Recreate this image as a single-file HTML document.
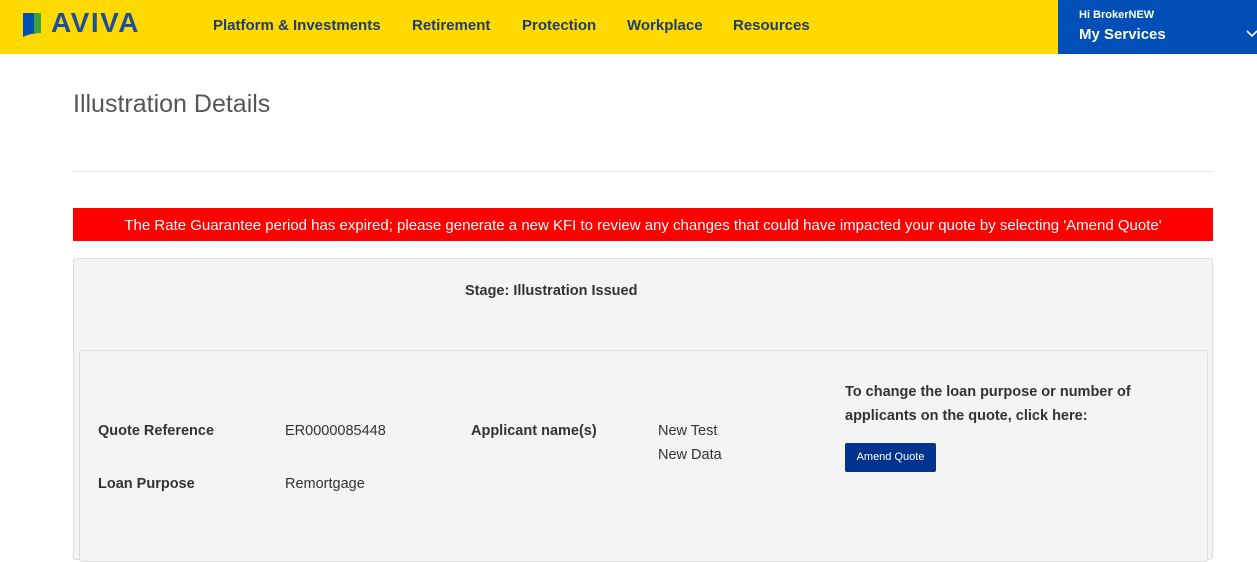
<!DOCTYPE html>
<html><head><meta charset="utf-8"><style>
body{margin:0;width:1257px;height:547px;overflow:hidden;background:#fff;font-family:"Liberation Sans",sans-serif;color:#333;position:relative}
.hdr{position:absolute;left:0;top:0;width:1257px;height:54px;background:#ffd900}
.nav{position:absolute;top:17px;font-size:15px;font-weight:bold;color:#1f3c74}
.svc{position:absolute;left:1058px;top:0;width:199px;height:54px;background:#004fb6;color:#fff}
.abs{position:absolute}
</style></head><body>
<div class="hdr">
 <svg class="abs" style="left:22px;top:12px" width="26" height="25"><path d="M1 1 L19 1 L19 21 Q9 21 1 25Z" fill="#004fb6"/><rect x="12" y="1" width="7" height="20" fill="#3ca33c"/></svg>
 <div class="abs" style="left:51px;top:7px;font-size:28px;font-weight:bold;color:#1d4f9e;letter-spacing:1.5px">AVIVA</div>
 <div class="nav" style="left:213px">Platform &amp; Investments</div>
 <div class="nav" style="left:412px">Retirement</div>
 <div class="nav" style="left:522px">Protection</div>
 <div class="nav" style="left:627px">Workplace</div>
 <div class="nav" style="left:733px">Resources</div>
 <div class="svc">
  <div class="abs" style="left:21px;top:9px;font-size:11px;font-weight:bold">Hi BrokerNEW</div>
  <div class="abs" style="left:21px;top:26px;font-size:15px;font-weight:bold">My Services</div>
  <svg class="abs" style="left:188px;top:30px" width="12" height="8"><path d="M1 1 L6 6 L11 1" stroke="#fff" stroke-width="1.6" fill="none"/></svg>
 </div>
</div>
<div class="abs" style="left:73px;top:90px;font-size:25px;color:#555">Illustration Details</div>
<div class="abs" style="left:73px;top:171px;width:1140px;height:1px;background:#e5e5e5"></div>
<div class="abs" style="left:73px;top:208px;width:1140px;height:33px;background:#ff0000;color:#fff;font-size:15px;text-align:center;line-height:35px">The Rate Guarantee period has expired; please generate a new KFI to review any changes that could have impacted your quote by selecting 'Amend Quote'</div>
<div class="abs" style="left:73px;top:258px;width:1138px;height:300px;background:#f4f4f4;border:1px solid #ddd;border-radius:3px"></div>
<div class="abs" style="left:465px;top:283px;font-size:14.5px;font-weight:bold">Stage: Illustration Issued</div>
<div class="abs" style="left:79px;top:350px;width:1127px;height:210px;background:#f4f4f4;border:1px solid #ddd;border-radius:3px"></div>
<div class="abs" style="left:98px;top:423px;font-size:14.5px;font-weight:bold">Quote Reference</div>
<div class="abs" style="left:285px;top:423px;font-size:14.5px">ER0000085448</div>
<div class="abs" style="left:471px;top:423px;font-size:14.5px;font-weight:bold">Applicant name(s)</div>
<div class="abs" style="left:658px;top:419px;font-size:14.5px;line-height:24px">New Test<br>New Data</div>
<div class="abs" style="left:98px;top:476px;font-size:14.5px;font-weight:bold">Loan Purpose</div>
<div class="abs" style="left:285px;top:476px;font-size:14.5px">Remortgage</div>
<div class="abs" style="left:845px;top:380px;font-size:14.5px;font-weight:bold;line-height:24px">To change the loan purpose or number of<br>applicants on the quote, click here:</div>
<div class="abs" style="left:845px;top:443px;width:91px;height:29px;background:#00338d;color:#fff;font-size:11px;text-align:center;line-height:29px;border-radius:2px">Amend Quote</div>
</body></html>
